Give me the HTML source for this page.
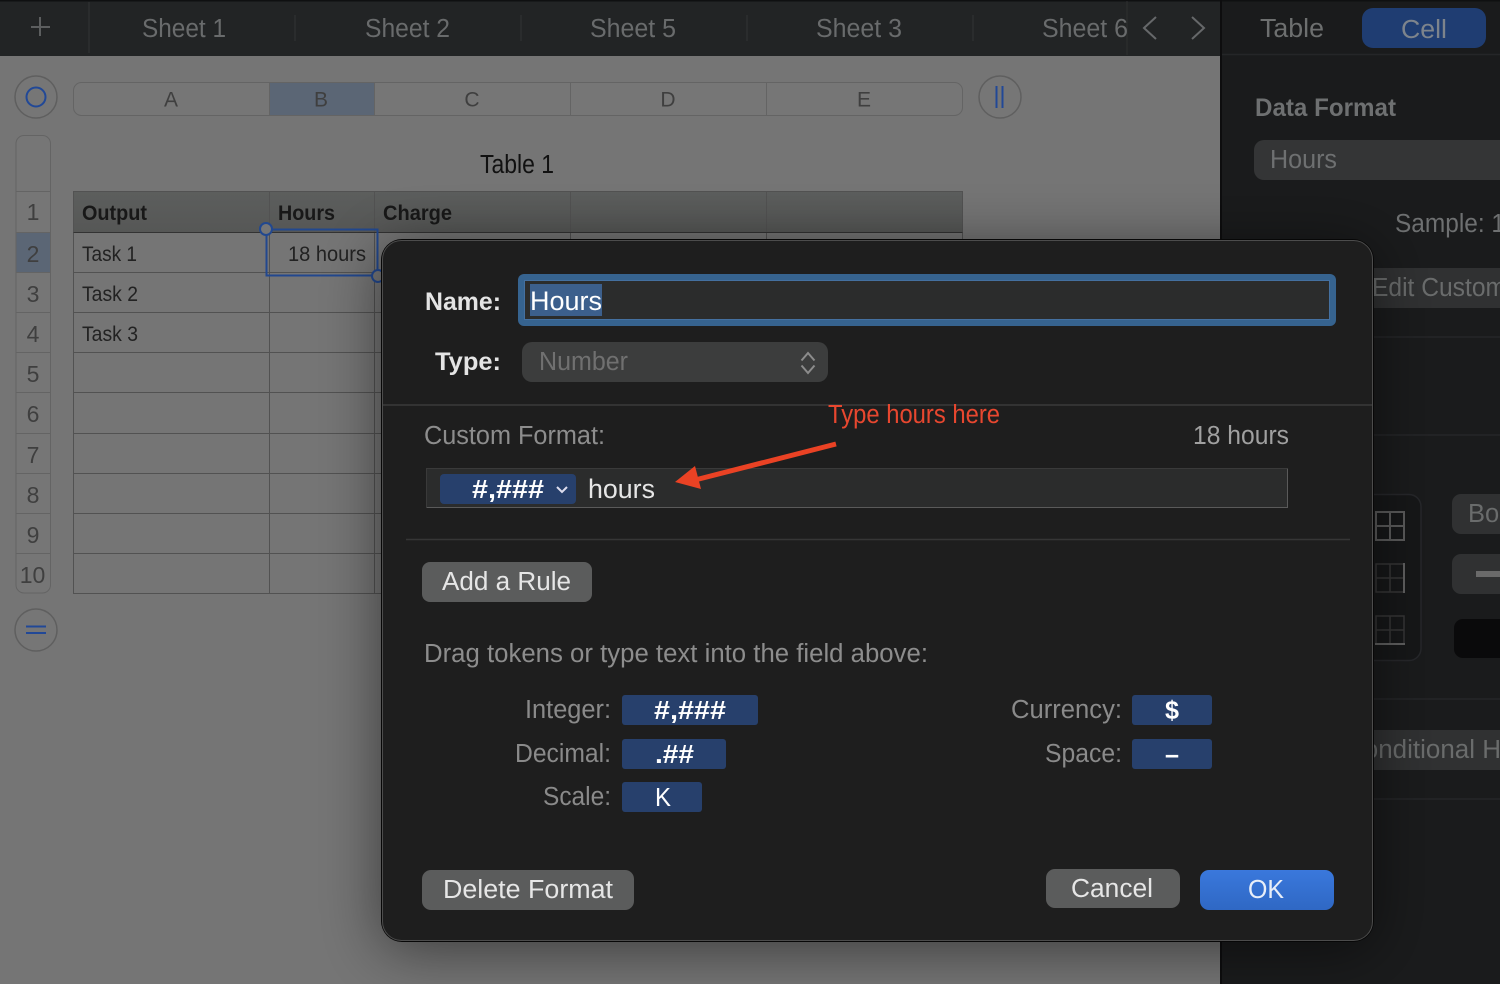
<!DOCTYPE html>
<html lang="en">
<head>
<meta charset="utf-8">
<title>Custom Format</title>
<style>
html,body{margin:0;padding:0;background:#757575;width:1500px;height:984px;overflow:hidden}
svg{display:block}
text{font-family:"Liberation Sans",sans-serif;font-size:25.5px;white-space:pre}
.b{font-weight:bold}
</style>
</head>
<body>
<svg xmlns="http://www.w3.org/2000/svg" width="1500" height="984" viewBox="0 0 1500 984">
<defs>
<filter id="sh" x="-20%" y="-20%" width="140%" height="140%"><feDropShadow dx="0" dy="8" stdDeviation="30" flood-color="#000" flood-opacity="0.5"/></filter>
<linearGradient id="hd" x1="0" y1="0" x2="0" y2="1"><stop offset="0" stop-color="#5c5e5d"/><stop offset="1" stop-color="#565756"/></linearGradient>
<linearGradient id="ok" x1="0" y1="0" x2="0" y2="1"><stop offset="0" stop-color="#3a78dc"/><stop offset="1" stop-color="#2f68c4"/></linearGradient>
</defs>

<!-- canvas -->
<rect width="1221" height="984" y="0" fill="#757575"/>

<!-- top bar -->
<rect width="1221" height="56" fill="#222425"/>
<rect width="1500" height="1.5" fill="#0f1011"/>
<path d="M40 17V36M31 27H50" stroke="#5c5e5f" stroke-width="2" fill="none"/>
<path d="M89 2V53" stroke="#2d2f30" stroke-width="1.5"/>
<path d="M295 15V41M521 15V41M747 15V41M973 15V41" stroke="#2d2f30" stroke-width="1.5"/>
<path d="M1127 1V55" stroke="#2d2f30" stroke-width="1"/>
<g fill="#696b6c">
<text x="142" y="37" textLength="84" lengthAdjust="spacingAndGlyphs">Sheet 1</text>
<text x="365" y="37" textLength="85" lengthAdjust="spacingAndGlyphs">Sheet 2</text>
<text x="590" y="37" textLength="86" lengthAdjust="spacingAndGlyphs">Sheet 5</text>
<text x="816" y="37" textLength="86" lengthAdjust="spacingAndGlyphs">Sheet 3</text>
<text x="1042" y="37" textLength="86" lengthAdjust="spacingAndGlyphs">Sheet 6</text>
</g>
<path d="M1156 17L1144 28L1156 39M1192 17L1204 28L1192 39" stroke="#66686a" stroke-width="2" fill="none"/>

<!-- right panel -->
<rect x="1221" y="0" width="279" height="984" fill="#1a1b1c"/>
<rect x="1220" y="0" width="2" height="984" fill="#0d0d0e"/>
<rect x="1222" y="0" width="278" height="1.5" fill="#0f1011"/>
<path d="M1222 54.5H1500M1373 337H1500M1373 435H1500M1373 699H1500M1373 799H1500" stroke="#252628" stroke-width="1.5"/>
<text x="1260" y="37" textLength="64" lengthAdjust="spacingAndGlyphs" fill="#6d6f6f">Table</text>
<rect x="1362" y="8" width="124" height="40" rx="11" fill="#1f3d72"/>
<text x="1401" y="38" textLength="46" lengthAdjust="spacingAndGlyphs" fill="#7d848c">Cell</text>
<text x="1255" y="116" class="b" textLength="141" lengthAdjust="spacingAndGlyphs" fill="#6e7071" style="font-size:25px">Data Format</text>
<rect x="1254" y="140" width="270" height="40" rx="10" fill="#343536"/>
<text x="1270" y="168" textLength="67" lengthAdjust="spacingAndGlyphs" fill="#6e7071">Hours</text>
<text x="1395" y="232" fill="#6e7071" textLength="110" lengthAdjust="spacingAndGlyphs">Sample: 1</text>
<rect x="1340" y="268" width="170" height="40" fill="#303132"/>
<text x="1372" y="296" fill="#6a6c6c" textLength="134" lengthAdjust="spacingAndGlyphs">Edit Custom</text>
<rect x="1300" y="494.5" width="121" height="166" rx="12" fill="#161718" stroke="#26272a" stroke-width="1.5"/>
<g fill="none" stroke="#5a5a5a" stroke-width="2">
<path d="M1376 512H1404V540H1376ZM1390 512V540M1376 526H1404"/>
</g>
<g fill="none" stroke="#363636" stroke-width="1.5">
<path d="M1376 564H1404V592H1376ZM1390 564V592M1376 578H1404"/>
<path d="M1376 616H1404V644H1376ZM1390 616V644M1376 630H1404"/>
</g>
<path d="M1404 563V593M1375 644H1405" stroke="#5f5f5f" stroke-width="2" fill="none"/>
<rect x="1452" y="494" width="70" height="40" rx="9" fill="#303132"/>
<text x="1468" y="522" fill="#6a6c6c">Bor</text>
<rect x="1452" y="554" width="70" height="40" rx="9" fill="#303132"/>
<rect x="1476" y="571" width="30" height="6" fill="#6a6a6a"/>
<rect x="1454" y="619" width="70" height="39" rx="9" fill="#0a0a0b"/>
<rect x="1340" y="730" width="170" height="40" fill="#303132"/>
<text x="1345" y="758" fill="#6a6c6c" textLength="156" lengthAdjust="spacingAndGlyphs">Conditional H</text>

<!-- column header -->
<circle cx="36" cy="97" r="21" fill="#767676" stroke="#5f5f5f" stroke-width="1.5"/>
<circle cx="36" cy="97" r="9.5" fill="none" stroke="#214897" stroke-width="2"/>
<rect x="73.5" y="82.5" width="889" height="33" rx="8" fill="#767676" stroke="#646464"/>
<rect x="269.5" y="83" width="105" height="32" fill="#5b6675"/>
<path d="M269.5 83V115M374.5 83V115M570.5 83V115M766.5 83V115" stroke="#646464"/>
<g fill="#3f3f3f" style="text-anchor:middle">
<text x="171" y="106.5" style="font-size:21px">A</text>
<text x="321" y="106.5" style="font-size:21px">B</text>
<text x="472" y="106.5" style="font-size:21px">C</text>
<text x="668" y="106.5" style="font-size:21px">D</text>
<text x="864" y="106.5" style="font-size:21px">E</text>
</g>
<circle cx="1000" cy="97" r="21" fill="#767676" stroke="#5f5f5f" stroke-width="1.5"/>
<path d="M996.5 86V108M1002.5 86V108" stroke="#214897" stroke-width="2"/>

<!-- row header -->
<rect x="16" y="135.5" width="34.5" height="457.5" rx="8" fill="#767676" stroke="#646464"/>
<rect x="16.5" y="232" width="33.5" height="40" fill="#5b6675"/>
<path d="M16 191.5H50M16 232.5H50M16 272.5H50M16 312.5H50M16 352.5H50M16 392.5H50M16 433.5H50M16 473.5H50M16 513.5H50M16 553.5H50" stroke="#646464"/>
<g fill="#3f3f3f" text-anchor="middle">
<text x="33" y="220" style="font-size:23px">1</text>
<text x="33" y="262" style="font-size:23px">2</text>
<text x="33" y="302" style="font-size:23px">3</text>
<text x="33" y="342" style="font-size:23px">4</text>
<text x="33" y="382" style="font-size:23px">5</text>
<text x="33" y="422" style="font-size:23px">6</text>
<text x="33" y="463" style="font-size:23px">7</text>
<text x="33" y="503" style="font-size:23px">8</text>
<text x="33" y="543" style="font-size:23px">9</text>
<text x="32.5" y="583" style="font-size:23px">10</text>
</g>
<circle cx="36" cy="630" r="21" fill="#767676" stroke="#5f5f5f" stroke-width="1.5"/>
<path d="M26 626.5H46M26 633H46" stroke="#214897" stroke-width="2"/>

<!-- table -->
<text x="480" y="173" fill="#111" textLength="74" lengthAdjust="spacingAndGlyphs">Table 1</text>
<rect x="73.5" y="191.5" width="889" height="41" fill="url(#hd)"/>
<g stroke="#525252" fill="none">
<path d="M73.5 191.5H962.5V593.5H73.5ZM269.5 191.5V593.5M374.5 191.5V593.5M570.5 191.5V593.5M766.5 191.5V593.5"/>
<path d="M73.5 272.5H962.5M73.5 312.5H962.5M73.5 352.5H962.5M73.5 392.5H962.5M73.5 433.5H962.5M73.5 473.5H962.5M73.5 513.5H962.5M73.5 553.5H962.5"/>
</g>
<path d="M73.5 232.5H962.5" stroke="#333" stroke-width="1"/>
<g fill="#181818">
<text x="82" y="220" class="b" textLength="65" lengthAdjust="spacingAndGlyphs" style="font-size:21px">Output</text>
<text x="278" y="220" class="b" textLength="57" lengthAdjust="spacingAndGlyphs" style="font-size:21px">Hours</text>
<text x="383" y="220" class="b" textLength="69" lengthAdjust="spacingAndGlyphs" style="font-size:21px">Charge</text>
</g>
<g fill="#222">
<text x="82" y="261" textLength="55" lengthAdjust="spacingAndGlyphs" style="font-size:21px">Task 1</text>
<text x="82" y="301" textLength="56" lengthAdjust="spacingAndGlyphs" style="font-size:21px">Task 2</text>
<text x="82" y="341" textLength="56" lengthAdjust="spacingAndGlyphs" style="font-size:21px">Task 3</text>
<text x="288" y="261" textLength="78" lengthAdjust="spacingAndGlyphs" style="font-size:21px">18 hours</text>
</g>
<rect x="266.5" y="229.5" width="111" height="46" fill="none" stroke="#22488f" stroke-width="2"/>
<circle cx="266" cy="229" r="6" fill="#767676" stroke="#22488f" stroke-width="2"/>
<circle cx="378" cy="276" r="6" fill="#767676" stroke="#22488f" stroke-width="2"/>

<!-- dialog -->
<rect x="381.5" y="239.5" width="992" height="702" rx="20" fill="#000" filter="url(#sh)"/>
<rect x="381" y="239" width="993" height="703" rx="21" fill="#070707"/>
<rect x="382.5" y="240.5" width="990" height="700" rx="19" fill="#1e1e1e" stroke="#4c4c4c" stroke-width="1"/>

<text x="425" y="310" class="b" textLength="76" lengthAdjust="spacingAndGlyphs" fill="#e4e4e4" style="font-size:25px">Name:</text>
<rect x="518" y="274" width="818" height="52" rx="6" fill="#36638f"/>
<rect x="524.5" y="280.5" width="805" height="39" fill="#2b2c2c" stroke="#4470a0" stroke-width="1"/>
<rect x="530" y="284" width="72" height="32" fill="#3c5f8c"/>
<text x="530" y="310" textLength="72" lengthAdjust="spacingAndGlyphs" fill="#fff" style="font-size:27px">Hours</text>

<text x="435" y="370" class="b" textLength="66" lengthAdjust="spacingAndGlyphs" fill="#e4e4e4" style="font-size:25px">Type:</text>
<rect x="522" y="342" width="306" height="40" rx="10" fill="#3c3d3d"/>
<text x="539" y="370" textLength="89" lengthAdjust="spacingAndGlyphs" fill="#707070">Number</text>
<path d="M801.5 360.5L808 353L814.5 360.5M801.5 365.5L808 373L814.5 365.5" stroke="#8c8c8c" stroke-width="2" fill="none"/>

<path d="M383 405H1372" stroke="#3a3a3a" stroke-width="1.5"/>
<text x="424" y="444" textLength="181" lengthAdjust="spacingAndGlyphs" fill="#8d8d8d">Custom Format:</text>
<text x="1193" y="444" textLength="96" lengthAdjust="spacingAndGlyphs" fill="#a0a0a0">18 hours</text>
<text x="828" y="423" textLength="172" lengthAdjust="spacingAndGlyphs" fill="#e8472f">Type hours here</text>

<rect x="426" y="468" width="862" height="40" fill="#2b2c2c"/>
<path d="M426.5 507.5H1287.5V468.5" stroke="#5a5a5a" fill="none"/>
<path d="M426.5 507.5V468.5H1287.5" stroke="#3a3a3a" fill="none"/>
<rect x="440" y="474" width="136" height="30" rx="4" fill="#27406c"/>
<text x="472" y="498" class="b" textLength="72" lengthAdjust="spacingAndGlyphs" fill="#fff" style="font-size:26px">#,###</text>
<path d="M557 487L562 492L567 487" stroke="#dde" stroke-width="2" fill="none"/>
<text x="588" y="498" textLength="67" lengthAdjust="spacingAndGlyphs" fill="#e6e6e6" style="font-size:27px">hours</text>

<path d="M836 444L695 480" stroke="#ea4224" stroke-width="5" fill="none"/>
<path d="M675 482L695 466L701 489Z" fill="#ea4224"/>

<path d="M406 539.5H1350" stroke="#363636" stroke-width="1.5"/>

<rect x="422" y="562" width="170" height="40" rx="8" fill="#5b5c5c"/>
<text x="442" y="590" textLength="129" lengthAdjust="spacingAndGlyphs" fill="#e6e6e6">Add a Rule</text>
<text x="424" y="662" textLength="504" lengthAdjust="spacingAndGlyphs" fill="#8d8d8d">Drag tokens or type text into the field above:</text>

<g fill="#8a8a8a">
<text x="525" y="718" textLength="86" lengthAdjust="spacingAndGlyphs">Integer:</text>
<text x="515" y="762" textLength="96" lengthAdjust="spacingAndGlyphs">Decimal:</text>
<text x="543" y="805" textLength="68" lengthAdjust="spacingAndGlyphs">Scale:</text>
<text x="1011" y="718" textLength="111" lengthAdjust="spacingAndGlyphs">Currency:</text>
<text x="1045" y="762" textLength="77" lengthAdjust="spacingAndGlyphs">Space:</text>
</g>
<g fill="#27406c">
<rect x="622" y="695" width="136" height="30" rx="3"/>
<rect x="622" y="739" width="104" height="30" rx="3"/>
<rect x="622" y="782" width="80" height="30" rx="3"/>
<rect x="1132" y="695" width="80" height="30" rx="3"/>
<rect x="1132" y="739" width="80" height="30" rx="3"/>
</g>
<g fill="#fff">
<text x="654" y="719" class="b" textLength="72" lengthAdjust="spacingAndGlyphs" style="font-size:26px">#,###</text>
<text x="655" y="763" class="b" textLength="39" lengthAdjust="spacingAndGlyphs" style="font-size:26px">.##</text>
<text x="655" y="806" textLength="16" lengthAdjust="spacingAndGlyphs" style="font-size:26px">K</text>
<text x="1165" y="719" class="b" textLength="14" lengthAdjust="spacingAndGlyphs" style="font-size:26px">$</text>
<text x="1165" y="763" class="b" textLength="14" lengthAdjust="spacingAndGlyphs" style="font-size:26px">–</text>
</g>

<rect x="422" y="870" width="212" height="40" rx="9" fill="#5b5c5c"/>
<text x="443" y="898" textLength="170" lengthAdjust="spacingAndGlyphs" fill="#e6e6e6">Delete Format</text>
<rect x="1046" y="869" width="134" height="39" rx="9" fill="#5b5c5c"/>
<text x="1071" y="897" textLength="82" lengthAdjust="spacingAndGlyphs" fill="#e6e6e6">Cancel</text>
<rect x="1200" y="870" width="134" height="40" rx="9" fill="url(#ok)"/>
<text x="1248" y="898" textLength="36" lengthAdjust="spacingAndGlyphs" fill="#e8eef8">OK</text>
</svg>
</body>
</html>
